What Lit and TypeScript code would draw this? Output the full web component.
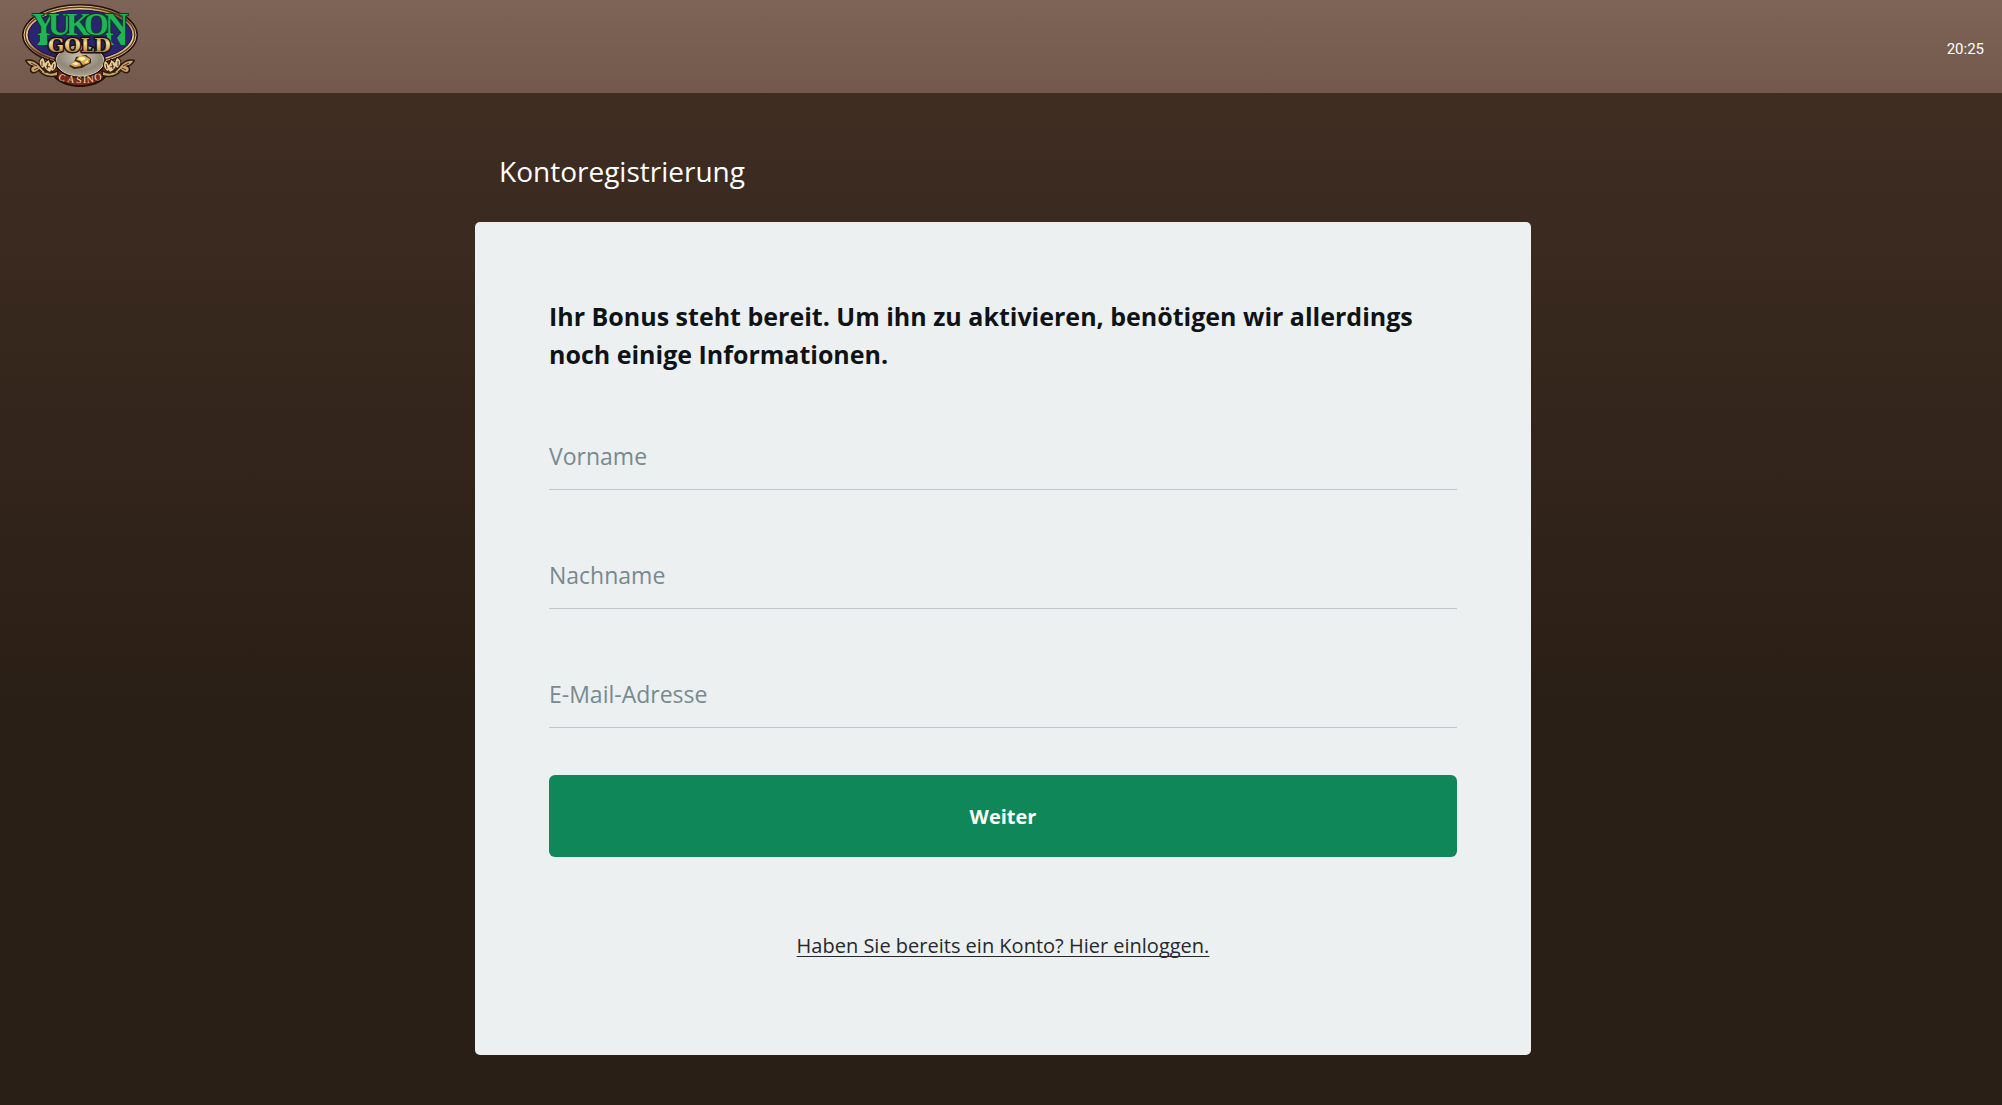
import { LitElement, html, css, svg } from "lit";
import { customElement, property } from "lit/decorators.js";

@customElement("casino-logo")
export class CasinoLogo extends LitElement {
  static styles = css`
    :host {
      display: block;
    }
    .art {
      display: block;
      width: 120px;
      height: 84px;
    }
    .yukon {
      font: 700 32px "Liberation Serif", serif;
      fill: #1fb455;
      stroke: #0c3a25;
      stroke-width: 2;
      paint-order: stroke;
    }
    .gold {
      font: 700 19px "DejaVu Serif", serif;
      fill: url(#gold);
      stroke: #1d0f08;
      stroke-width: 3;
      stroke-linejoin: round;
      paint-order: stroke;
    }
    .casino {
      font: 400 10px "Liberation Serif", serif;
      fill: #f3dcae;
    }
  `;

  private branch() {
    return svg`
      <path d="M57 72C49 76 44 72 40 67C36 62 31 60 27 61C29 65 32 65 35 66C31 67 30 70 33 72C36 72 38 70 39 69C42 74 48 77 57 75Z"
        fill="#c9a568" stroke="#2a170d" stroke-width="3" paint-order="stroke" />
      <path d="M50 72C42 68 43 63 49 60C49 64 54 66 50 72ZM43 68C38 64 39 60 43 58C45 62 46 64 43 68ZM52 71C49 67 52 63 55 61C57 65 56 69 52 71Z"
        fill="#e6cc95" stroke="#2a170d" stroke-width="2" paint-order="stroke" />
      <path d="M47 69L48 63M42 66L42 61M53 69L54 64M31 63L37 66M34 70L38 68M44 72L51 73M46 66L50 67M39 69L42 72" fill="none" stroke="#4a2a14" stroke-width="1" />`;
  }

  render() {
    return html`<svg class="art" viewBox="20 4 120 84" role="img" aria-label="Yukon Gold Casino">
      <defs>
        <linearGradient id="gold" x1="0" y1="0" x2="0" y2="1">
          <stop offset="0.1" stop-color="#a87a35" />
          <stop offset="0.4" stop-color="#f3dfa0" />
          <stop offset="0.65" stop-color="#d9b162" />
          <stop offset="0.9" stop-color="#865823" />
        </linearGradient>
        <linearGradient id="rim" x1="0" y1="0" x2="1" y2="1">
          <stop offset="0" stop-color="#a9753b" />
          <stop offset="0.25" stop-color="#f5d99a" />
          <stop offset="0.5" stop-color="#8a5529" />
          <stop offset="0.8" stop-color="#f2d493" />
          <stop offset="1" stop-color="#9b6832" />
        </linearGradient>
        <radialGradient id="silver" cx="0.5" cy="0.35" r="0.65">
          <stop offset="0" stop-color="#c9c3b4" />
          <stop offset="0.7" stop-color="#918878" />
          <stop offset="1" stop-color="#aaa18e" />
        </radialGradient>
      </defs>
      <path d="M47 61C48 78 63 87 80 87S112 78 113 61Z" fill="#221009" />
      <path d="M49 62C51 77 65 85 80 85S109 77 111 62Z" fill="#76281b" />
      <ellipse cx="80" cy="35" rx="58" ry="31" fill="#1f1210" />
      <ellipse cx="80" cy="35" rx="56" ry="29" fill="#5b3420" stroke="url(#rim)" stroke-width="1" />
      <ellipse cx="80" cy="35" rx="53" ry="26" fill="#2b2570" stroke="url(#rim)" stroke-width="2" />
      <ellipse cx="80" cy="35" rx="52" ry="25" fill="#2a2471" stroke="#191344" stroke-width="1" />
      <ellipse cx="80" cy="61" rx="26" ry="17" fill="#23120b" />
      <ellipse cx="80" cy="61" rx="24" ry="15" fill="url(#silver)" stroke="#d8cfb8" stroke-width="1" />
      <path d="M69 66L74 62L76 57L81 56L86 55L91 59L91 63L87 65L82 68L74 69Z" fill="#3b2410" />
      <path d="M70 65L75 61L80 63L81 66L75 67ZM76 60L79 56L85 56L90 59L89 63L83 65L80 61Z" fill="#dba84a" />
      <path d="M72 64L76 62L79 64L76 65ZM78 59L80 57L84 57L86 59L82 61ZM85 62L88 60L88 62L85 63Z" fill="#fff3bf" />
      <g>${this.branch()}</g>
      <g transform="matrix(-1 0 0 1 160 0)">${this.branch()}</g>
      <text class="yukon" x="32 48 66 84 105" y="35">YUKON</text>
      <path d="M40 33H47V41L50 45H37L40 41ZM107 33H111V41L114 45H104L107 41ZM121 33H125V45H121L117 38Z" fill="#1fb455" />
      <text class="gold" x="48" y="52">GOLD</text>
      <text class="casino" x="58 67 76 83 87 95" y="80 82 83 83 83 81" rotate="14 8 3 0 -6 -12">CASINO</text>
    </svg>`;
  }
}

@customElement("text-field")
export class TextField extends LitElement {
  static styles = css`
    :host {
      display: block;
    }
    .field {
      display: grid;
      height: 66px;
      border-bottom: 1px solid #c0c6c9;
    }
    .label,
    .input {
      grid-area: 1 / 1;
      font: 400 23px/32px "Open Sans", "Noto Sans", sans-serif;
    }
    .label {
      align-self: center;
      color: #78898f;
      pointer-events: none;
    }
    .input {
      width: 100%;
      min-width: 0;
      box-sizing: border-box;
      padding: 0;
      border: 0;
      outline: 0;
      background: transparent;
      color: #0f1316;
    }
    .input:focus + .label,
    .input:not(:placeholder-shown) + .label {
      align-self: start;
      font-size: 14px;
      line-height: 16px;
    }
  `;

  @property() label = "";
  @property() type = "text";
  @property() name = "";

  render() {
    return html`<div class="field">
      <input class="input" id="control" type=${this.type} name=${this.name} placeholder=" " />
      <label class="label" for="control">${this.label}</label>
    </div>`;
  }
}

@customElement("app-root")
export class AppRoot extends LitElement {
  static styles = css`
    :host {
      display: block;
      font-family: "Open Sans", "Noto Sans", sans-serif;
    }
    .page {
      display: flex;
      flex-direction: column;
      min-height: 100vh;
      box-sizing: border-box;
      background: linear-gradient(#3f2d22 93px, #2a1f16 700px);
    }
    .header {
      display: flex;
      align-items: center;
      justify-content: space-between;
      box-sizing: border-box;
      height: 93px;
      padding: 4px 18px 5px 20px;
      background: linear-gradient(#7e6457, #72594c);
    }
    .clock {
      padding-top: 6px;
      color: #ffffff;
      font: 400 15px/20px "Roboto", sans-serif;
    }
    .main {
      padding: 58px 20px 48px 24px;
    }
    .column {
      max-width: 1056px;
      margin: 0 auto;
    }
    .title {
      margin: 0 0 31px;
      padding: 0 24px;
      color: #ffffff;
      font-size: 28px;
      font-weight: 400;
      line-height: 40px;
    }
    .card {
      display: flex;
      flex-direction: column;
      padding: 75px 74px 92px;
      border-radius: 5px;
      background: #ecf0f1;
    }
    .intro {
      margin: 0 0 50px;
      color: #0f1316;
      font-size: 25px;
      font-weight: 700;
      line-height: 38px;
    }
    .fields {
      display: grid;
      gap: 52px;
    }
    .submit {
      height: 82px;
      margin: 47px 0 72px;
      padding: 2px 0 0;
      border: 0;
      border-radius: 6px;
      background: #108759;
      color: #ffffff;
      font: 700 20px/28px "Open Sans", "Noto Sans", sans-serif;
      cursor: pointer;
    }
    .login {
      align-self: center;
      color: #26292c;
      font-size: 20px;
      line-height: 34px;
      text-underline-offset: 3px;
      text-decoration-thickness: 1px;
      text-decoration-skip-ink: none;
    }
  `;

  render() {
    return html`<div class="page">
      <header class="header">
        <casino-logo></casino-logo>
        <time class="clock">20:25</time>
      </header>
      <main class="main">
        <div class="column">
          <h1 class="title">Kontoregistrierung</h1>
          <form class="card" @submit=${(e: Event) => e.preventDefault()}>
            <h2 class="intro">
              Ihr Bonus steht bereit. Um ihn zu aktivieren, benötigen wir allerdings noch einige Informationen.
            </h2>
            <div class="fields">
              <text-field label="Vorname" name="firstName"></text-field>
              <text-field label="Nachname" name="lastName"></text-field>
              <text-field label="E-Mail-Adresse" name="email" type="email"></text-field>
            </div>
            <button class="submit" type="submit">Weiter</button>
            <a class="login" href="#login">Haben Sie bereits ein Konto? Hier einloggen.</a>
          </form>
        </div>
      </main>
    </div>`;
  }
}
